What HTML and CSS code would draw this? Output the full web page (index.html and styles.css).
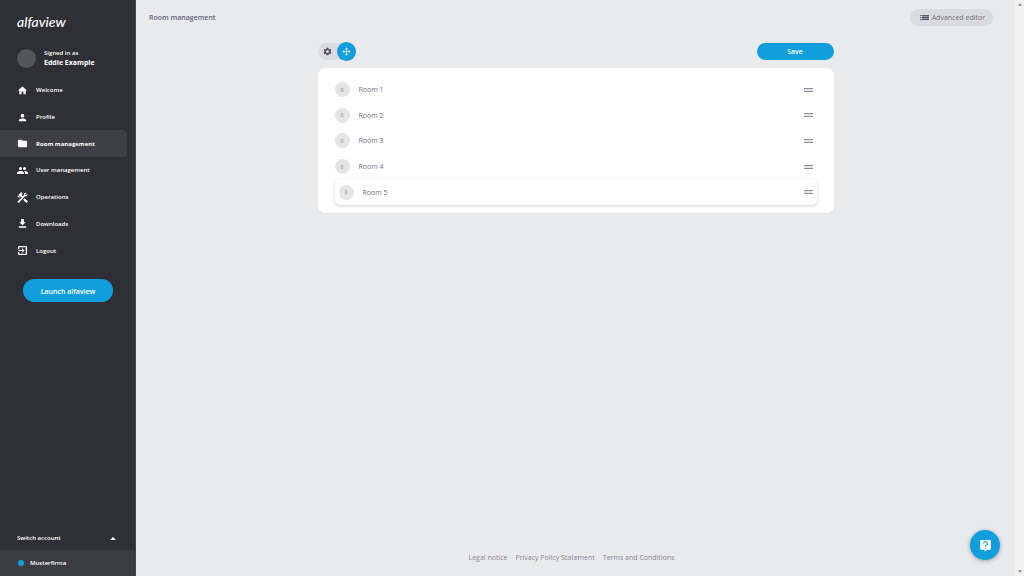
FILE: index.html
```html
<!DOCTYPE html>
<html lang="en">
<head>
<meta charset="utf-8">
<meta name="viewport" content="width=device-width, initial-scale=1">
<title>Room management</title>
<link rel="stylesheet" href="styles.css">
</head>
<body>
<div class="app">
  <aside class="sidebar">
    <div class="logo">alfaview</div>
    <div class="user">
      <span class="avatar"></span>
      <div class="user-text"><span>Signed in as</span><strong>Eddie Example</strong></div>
    </div>
    <nav class="nav">
      <a class="nav-item" href="#"><svg viewBox="0 0 24 24"><path d="M10 20v-6h4v6h5v-8h3L12 3 2 12h3v8z"/></svg>Welcome</a>
      <a class="nav-item" href="#"><svg viewBox="0 0 24 24"><path d="M12 12a4 4 0 1 0 0-8 4 4 0 0 0 0 8zm0 2c-2.700 0-8 1.300-8 4v2h16v-2c0-2.700-5.300-4-8-4z"/></svg>Profile</a>
      <a class="nav-item active" href="#"><svg viewBox="0 0 24 24"><path d="M10 4H4a2 2 0 0 0-2 2v12c0 1.100.9 2 2 2h16a2 2 0 0 0 2-2V8a2 2 0 0 0-2-2h-8z"/></svg>Room management</a>
      <a class="nav-item" href="#"><svg viewBox="1 1 22 22"><path d="M16 11a3 3 0 1 0 0-6 3 3 0 0 0 0 6zm-8 0a3 3 0 1 0 0-6 3 3 0 0 0 0 6zm0 2c-2.300 0-7 1.200-7 3.500V19h14v-2.500C15 14.200 10.300 13 8 13zm8 0-1 .1c1.200.8 2 2 2 3.400V19h6v-2.500c0-2.300-4.700-3.500-7-3.500z"/></svg>User management</a>
      <a class="nav-item" href="#"><svg viewBox="2 2 20 20"><path d="M13.200 15.900l2.700-2.700 6 6-2.700 2.700zM17.500 10a3.500 3.500 0 0 0 3.200-4.900l-2.700 2.700-1.500-1.500 2.700-2.700a3.500 3.500 0 0 0-4.700 4.300l-1.800 1.800-1.800-1.800.7-.7L10.200 5.800l2.100-2.100a3 3 0 0 0-4.200 0L4.500 7.200l1.400 1.400H3.100l-.7.700 3.500 3.600.8-.7V9.300l1.400 1.400.7-.7 1.800 1.800-8 8 2.600 2.100L16.300 9.800c.4.100.8.200 1.200.2z"/></svg>Operations</a>
      <a class="nav-item" href="#"><svg viewBox="0 0 24 24"><path d="M19 9h-4V2H9v7H5l7 7zM4 18v3h16v-3z"/></svg>Downloads</a>
      <a class="nav-item" href="#"><svg viewBox="0 0 24 24"><path d="M10 15.600 11.500 17l5-5-5-5L10 8.400l2.600 2.600H3v2h9.600zM19 2H5a3 3 0 0 0-3 3v4h3V5h14v14H5v-4H2v4a3 3 0 0 0 3 3h14a3 3 0 0 0 3-3V5a3 3 0 0 0-3-3z"/></svg>Logout</a>
    </nav>
    <button class="btn launch" type="button">Launch alfaview</button>
    <button class="switch" type="button">Switch account<svg viewBox="0 0 10 5"><path d="M0 5 5 0l5 5z"/></svg></button>
    <a class="account" href="#"><span class="dot"></span>Musterfirma</a>
  </aside>
  <main class="main">
    <header class="header">
      <h1 class="title">Room management</h1>
      <button class="advanced" type="button"><svg viewBox="0 0 18 10"><path d="M0 0h3v2H0zm0 4h3v2H0zm0 4h3v2H0zM4 0h14v2.500H4zm0 3.500h14v3H4zm0 4h14V10H4z"/></svg><span class="label">Advanced editor</span></button>
    </header>
    <section class="content">
      <div class="toolbar">
        <div class="modes">
          <button class="mode" type="button" aria-label="Settings"><svg viewBox="0 0 24 24"><path fill-rule="evenodd" d="M9.500 2h5l.5 3 2 1.100 2.800-1 2.400 4.200-2.300 1.900v1.700l2.300 1.900-2.400 4.200-2.800-1L15 19l-.5 3h-5L9 19l-2-1-2.800 1-2.400-4.200 2.300-1.900v-1.700L1.800 9.300l2.400-4.200 2.800 1L9 5zM12 8a4 4 0 1 0 0 8 4 4 0 0 0 0-8z"/></svg></button>
          <button class="mode selected" type="button" aria-label="Move"><svg viewBox="0 0 24 24"><path d="M12 1 8 6h3v5H6V8l-5 4 5 4v-3h5v5H8l4 5 4-5h-3v-5h5v3l5-4-5-4v3h-5V6h3z"/></svg></button>
        </div>
        <button class="btn save" type="button">Save</button>
      </div>
      <ul class="rooms">
        <li class="room"><span class="count">0</span><span class="name">Room 1</span><span class="grip"></span></li>
        <li class="room"><span class="count">0</span><span class="name">Room 2</span><span class="grip"></span></li>
        <li class="room"><span class="count">0</span><span class="name">Room 3</span><span class="grip"></span></li>
        <li class="room"><span class="count">0</span><span class="name">Room 4</span><span class="grip"></span></li>
        <li class="room lifted"><span class="count">0</span><span class="name">Room 5</span><span class="grip"></span></li>
      </ul>
    </section>
    <footer class="footer">
      <a href="#">Legal notice</a><a href="#">Privacy Policy Statement</a><a href="#">Terms and Conditions</a>
    </footer>
  </main>
  <div class="scrollbar"><svg viewBox="0 0 6 4"><path d="M0 4 3 0l3 4z"/></svg><svg viewBox="0 0 6 4"><path d="M0 0l3 4 3-4z"/></svg></div>
  <button class="help" type="button" aria-label="Help"><svg viewBox="0 0 24 24"><path class="bubble" d="M4 2h16a2 2 0 0 1 2 2v14a2 2 0 0 1-2 2h-5l-3 3-3-3H4a2 2 0 0 1-2-2V4c0-1.100.9-2 2-2z"/><path class="mark" d="M8.500 8.500a3.500 3.500 0 1 1 5.500 2.900c-1.300.9-2 1.500-2 3.100M12 16v2"/></svg></button>
</div>
</body>
</html>
```
FILE: styles.css
```css
* { box-sizing: border-box; }
body {
  margin: 0;
  background: #e9eaec;
  color: #737182;
  font: 7px/10px "Open Sans", "Noto Sans", sans-serif;
}
button { border: 0; margin: 0; padding: 0; font: inherit; color: inherit; background: none; cursor: pointer; }
a { color: inherit; text-decoration: none; }
svg { display: block; fill: currentColor; flex: none; }

.app { display: flex; min-height: 100vh; }

.sidebar {
  display: flex;
  flex-direction: column;
  flex: none;
  width: 136px;
  padding-top: 14px;
  border-right: 1px solid #45474c;
  background: #2e3035;
  color: #fff;
  font-size: 6px;
  font-weight: 600;
}
.logo { padding-left: 17px; font: italic 500 14px/16px Lato, sans-serif; }
.user { display: flex; align-items: center; gap: 8px; margin: 18px 0 9px 17px; }
.avatar { width: 19px; height: 19px; border-radius: 50%; background: #54565b; }
.user-text { display: flex; flex-direction: column; }
.user-text strong { font-size: 7px; font-weight: 700; }
.nav { display: grid; grid-template-rows: repeat(7, 1fr); height: 187px; padding-right: 8px; }
.nav-item { display: flex; align-items: center; gap: 8px; padding-left: 17px; border-radius: 0 4px 4px 0; }
.nav-item svg { width: 11px; height: 11px; }
.active { background: #3d3f44; font-weight: 700; }
.btn { padding-top: 2px; border-radius: 12px; background: #109fdc; color: #fff; font-size: 7px; font-weight: 600; text-align: center; }
.launch { height: 23px; margin: 15px 22px auto 23px; }
.switch { display: flex; align-items: center; justify-content: space-between; height: 24px; padding: 0 19px 0 17px; }
.switch svg { width: 6px; height: 3px; }
.account { display: flex; align-items: center; gap: 6px; height: 26px; padding-left: 18px; background: #3a3c41; }
.dot { width: 6px; height: 6px; border-radius: 50%; background: #109fdc; }

.main { display: flex; flex-direction: column; flex: 1; min-width: 0; }
.header { display: flex; align-items: center; justify-content: space-between; height: 34px; padding: 0 22px 0 13px; }
.title { margin: 0; padding-top: 2px; font-size: 7px; font-weight: 600; color: #62647a; }
.advanced { display: flex; align-items: center; gap: 3px; height: 17px; padding: 0 8px 0 10px; border-radius: 9px; background: #dadbde; }
.advanced svg { width: 9px; height: 5px; color: #55566a; }
.label { padding-top: 2px; }

.content { width: 100%; max-width: 516px; margin: 7px auto auto; }
.toolbar { display: flex; align-items: center; justify-content: space-between; height: 20px; margin-bottom: 7px; }
.modes { display: flex; align-items: center; height: 17px; border-radius: 10px; background: #dadbde; }
.mode { display: grid; place-items: center; width: 19px; height: 19px; border-radius: 50%; color: #4c4960; }
.mode svg { width: 9px; height: 9px; }
.selected { background: #109fdc; color: #fff; }
.save { width: 77px; height: 17px; }
.rooms {
  display: grid;
  grid-template-rows: repeat(5, 1fr);
  height: 145px;
  margin: 0;
  padding: 9px 17px 8px;
  border-radius: 7px;
  background: #fff;
  box-shadow: 0 0 1px #d8d9dc;
  list-style: none;
}
.room { display: flex; align-items: center; gap: 9px; padding-right: 4px; }
.count { display: grid; place-items: center; width: 15px; height: 15px; border-radius: 50%; background: #e5e5e5; font-size: 5px; }
.name { flex: 1; padding-top: 1px; }
.grip { width: 9px; height: 4px; border: solid #908e9c; border-width: 1px 0; background: #e6e5e9; }
.lifted { padding-left: 4px; border-radius: 5px; box-shadow: 0 1px 3px rgba(0, 0, 0, .18); }
.footer { display: flex; justify-content: center; gap: 8px; padding: 10px 8px 13px 0; color: #8a8897; }

.scrollbar { display: flex; flex-direction: column; align-items: center; justify-content: space-between; width: 9px; padding: 3px 0; background: #f1f1f1; color: #8b8b8b; }
.scrollbar svg { width: 4px; height: 3px; }
.help {
  position: fixed;
  right: 24px;
  bottom: 16px;
  display: grid;
  place-items: center;
  width: 30px;
  height: 30px;
  border-radius: 50%;
  background: #109fdc;
  box-shadow: 0 1px 4px rgba(0, 0, 0, .35);
}
.help svg { width: 13px; height: 13px; }
.bubble { fill: #fff; }
.mark { fill: none; stroke: #109fdc; stroke-width: 2; }
```
